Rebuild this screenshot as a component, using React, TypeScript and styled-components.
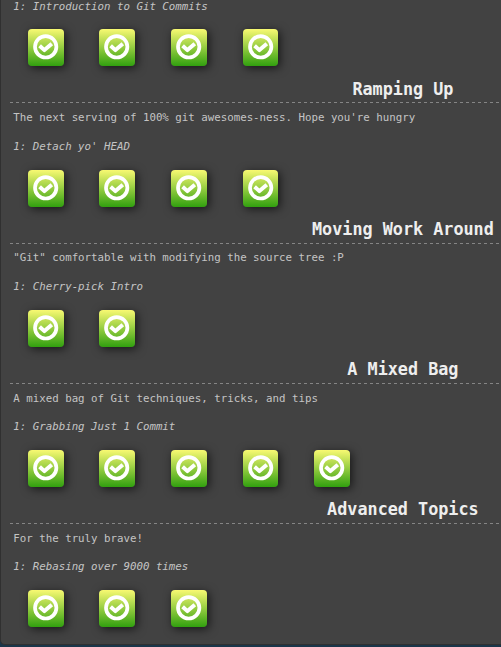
import React from "react";
import styled, { createGlobalStyle } from "styled-components";

const GlobalStyle = createGlobalStyle`
  html, body, #root { height: 100%; }
  body {
    margin: 0;
    overflow: hidden;
    background: #1a3549;
    font-family: "DejaVu Sans Mono", monospace;
  }
`;

const Viewport = styled.div`
  height: 647px;
  overflow: hidden;
  display: flex;
`;

const Panel = styled.main`
  box-sizing: border-box;
  flex: none;
  width: 804px;
  height: 645px;
  padding-left: 9px;
  background: #424242;
  border-left: 1px solid #303030;
  border-bottom: 1px solid #303030;
  border-bottom-left-radius: 5px;
  overflow: hidden;
`;

const Sequence = styled.section`
  width: 785.8px;
  height: 140.25px;
`;

/* The first sequence is scrolled partly out of view. */
const ScrolledSequence = styled(Sequence)`
  margin-top: -8.64px;
  height: 85.28px;
`;

const Title = styled.h2`
  box-sizing: border-box;
  margin: 0;
  height: 26.7px;
  font-size: 16.8px;
  line-height: 24px;
  text-align: center;
  color: #eee;
  background: repeating-linear-gradient(90deg, #858585 0 3px, transparent 3px 6px) bottom / 100% 1px no-repeat;
`;

const About = styled.p`
  box-sizing: border-box;
  margin: 0;
  padding: 4.7px 3.3px 0;
  height: 28.2px;
  font-size: 10.77px;
  line-height: 20px;
  color: #c4c4c4;
`;

const LevelName = styled(About)`
  padding-top: 5.17px;
  height: 23px;
  font-style: italic;
`;

const IconRow = styled.div`
  display: flex;
  gap: 35.8px;
  padding: 15px 0 0 17.8px;
`;

const LevelIcon = styled.div`
  box-sizing: border-box;
  width: 35.8px;
  height: 37px;
  padding: 5px 0 0 5px;
  border-radius: 4px;
  background: linear-gradient(#f8f972, #31a00f);
  box-shadow: 2px 2px 10px rgba(0, 0, 0, 0.65);
`;

const CheckSvg = styled.svg`
  display: block;
  width: 26px;
  height: 26px;
  fill: none;
  stroke: #fff;
`;

const Check = () => (
  <CheckSvg viewBox="0 0 26 26">
    <circle cx="12.7" cy="12.8" r="10.7" strokeWidth="3.7" />
    <path d="M6.6 11.7l4.8 4.4 7.4-6.3" strokeWidth="4" strokeLinejoin="round" />
  </CheckSvg>
);

const Icons = ({ count }: { count: number }) => (
  <IconRow>
    {Array.from({ length: count }, (_, i) => (
      <LevelIcon key={i}><Check /></LevelIcon>
    ))}
  </IconRow>
);

const sequences = [
  { title: "Ramping Up", about: "The next serving of 100% git awesomes-ness. Hope you're hungry", level: "1: Detach yo' HEAD", count: 4 },
  { title: "Moving Work Around", about: "\"Git\" comfortable with modifying the source tree :P", level: "1: Cherry-pick Intro", count: 2 },
  { title: "A Mixed Bag", about: "A mixed bag of Git techniques, tricks, and tips", level: "1: Grabbing Just 1 Commit", count: 5 },
  { title: "Advanced Topics", about: "For the truly brave!", level: "1: Rebasing over 9000 times", count: 3 },
];

export default function App() {
  return (
    <>
      <GlobalStyle />
      <Viewport>
        <Panel>
          <ScrolledSequence>
            <LevelName>1: Introduction to Git Commits</LevelName>
            <Icons count={4} />
          </ScrolledSequence>
          {sequences.map((s) => (
            <Sequence key={s.title}>
              <Title>{s.title}</Title>
              <About>{s.about}</About>
              <LevelName>{s.level}</LevelName>
              <Icons count={s.count} />
            </Sequence>
          ))}
        </Panel>
      </Viewport>
    </>
  );
}
